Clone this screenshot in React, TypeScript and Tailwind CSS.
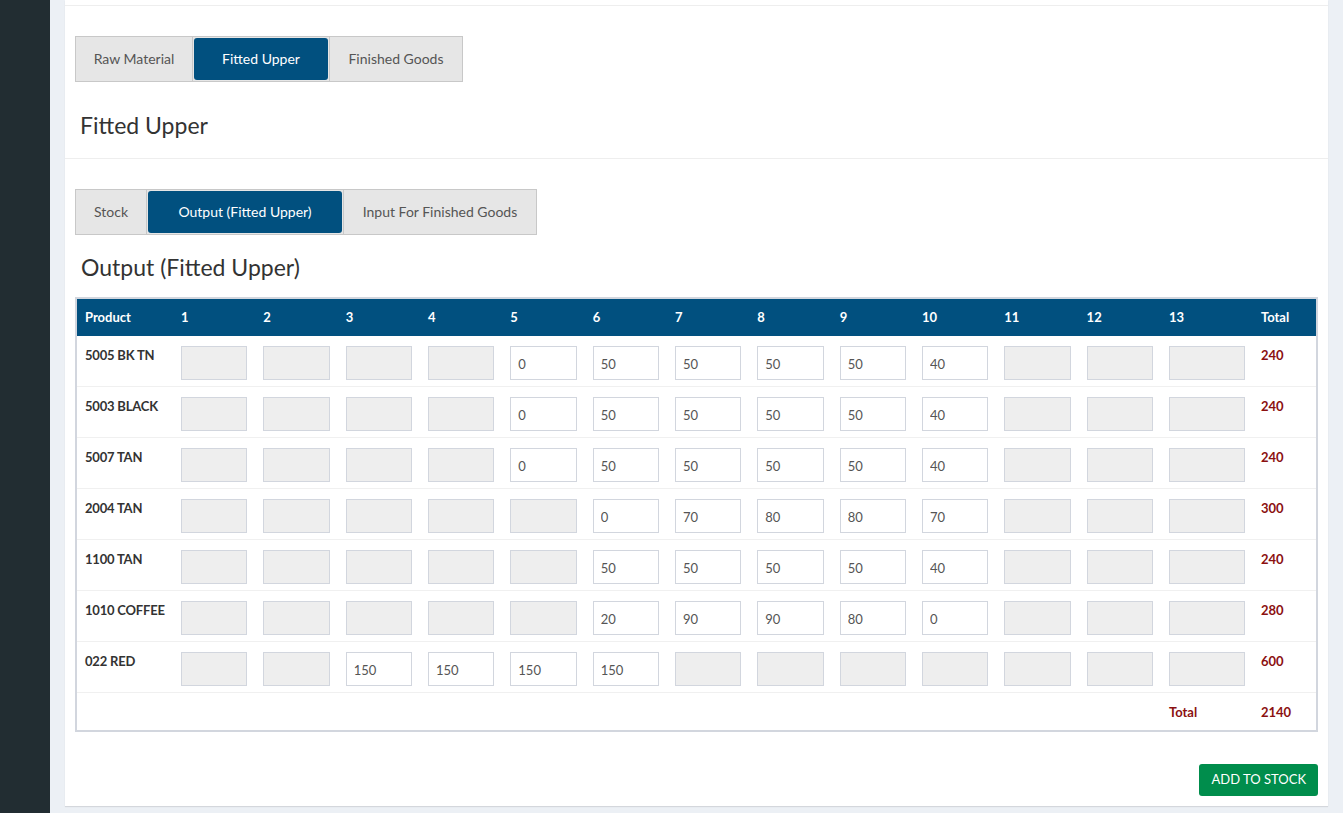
import React from 'react'

type Row = { name: string; values: (number | null)[]; total: number }

const ROWS: Row[] = [
  { name: '5005 BK TN', values: [null, null, null, null, 0, 50, 50, 50, 50, 40, null, null, null], total: 240 },
  { name: '5003 BLACK', values: [null, null, null, null, 0, 50, 50, 50, 50, 40, null, null, null], total: 240 },
  { name: '5007 TAN', values: [null, null, null, null, 0, 50, 50, 50, 50, 40, null, null, null], total: 240 },
  { name: '2004 TAN', values: [null, null, null, null, null, 0, 70, 80, 80, 70, null, null, null], total: 300 },
  { name: '1100 TAN', values: [null, null, null, null, null, 50, 50, 50, 50, 40, null, null, null], total: 240 },
  { name: '1010 COFFEE', values: [null, null, null, null, null, 20, 90, 90, 80, 0, null, null, null], total: 280 },
  { name: '022 RED', values: [null, null, 150, 150, 150, 150, null, null, null, null, null, null, null], total: 600 },
]

const SIZES = Array.from({ length: 13 }, (_, i) => i + 1)

function TabGroup({ tabs, active }: { tabs: { label: string; w: string }[]; active: number }) {
  return (
    <div className="flex">
      {tabs.map((t, i) => (
        <button
          key={t.label}
          className={`h-[46px] ${t.w} ${i > 0 ? '-ml-px' : ''} border border-[#c8c8c8] bg-[#e6e6e6] p-px text-[14px]`}
        >
          <span
            className={`flex h-full w-full items-center justify-center rounded-[3px] pb-[2px] ${
              i === active ? 'bg-[#01507f] text-white' : 'text-[#555]'
            }`}
          >
            {t.label}
          </span>
        </button>
      ))}
    </div>
  )
}

function Cell({ value }: { value: number | null }) {
  const disabled = value === null
  return (
    <input
      readOnly
      disabled={disabled}
      value={disabled ? '' : String(value)}
      className={`block h-[34px] w-full border border-[#d2d6de] px-[7px] pt-[1px] text-[13px] text-[#555] outline-none ${
        disabled ? 'bg-[#eeeeee]' : 'bg-white'
      }`}
    />
  )
}

export default function App() {
  const grand = ROWS.reduce((s, r) => s + r.total, 0)

  return (
    <div className="flex min-h-[813px] bg-[#ecf0f5] text-[#333]" style={{ fontFamily: 'Lato, "Open Sans", sans-serif' }}>
      <aside className="w-[50px] shrink-0 bg-[#222d32]" />
      <main className="flex-1 px-[15px] pb-[8px]">
        <div className="bg-white shadow-[0_1px_1px_rgba(0,0,0,0.1)]">
          <div className="h-[6px] border-b border-[#eeeeee]" />

          <div className="px-[10px] pt-[30px]">
            <TabGroup
              active={1}
              tabs={[
                { label: 'Raw Material', w: 'w-[118px]' },
                { label: 'Fitted Upper', w: 'w-[138px]' },
                { label: 'Finished Goods', w: 'w-[134px]' },
              ]}
            />
            <h3 className="mt-[28px] pl-[5px] text-[23px] leading-[30px]">Fitted Upper</h3>
          </div>
          <div className="mt-[18px] border-b border-[#eeeeee]" />

          <div className="px-[10px] pt-[30px] pb-[10px]">
            <TabGroup
              active={1}
              tabs={[
                { label: 'Stock', w: 'w-[72px]' },
                { label: 'Output (Fitted Upper)', w: 'w-[198px]' },
                { label: 'Input For Finished Goods', w: 'w-[194px]' },
              ]}
            />
            <h3 className="mt-[17px] pl-[6px] text-[23px] leading-[30px]">Output (Fitted Upper)</h3>

            <div className="mt-[15px] border-2 border-[#d2d6de]">
              <table className="w-full table-fixed border-collapse text-[13px]">
                <colgroup>
                  <col className="w-[96px]" />
                  {SIZES.slice(0, 12).map((s) => (
                    <col key={s} className="w-[82.33px]" />
                  ))}
                  <col className="w-[92px]" />
                  <col className="w-[63px]" />
                </colgroup>
                <thead>
                  <tr className="h-[37px] bg-[#01507f] text-left font-bold text-white">
                    <th className="px-[8px]">Product</th>
                    {SIZES.map((s) => (
                      <th key={s} className="px-[8px]">
                        {s}
                      </th>
                    ))}
                    <th className="px-[8px]">Total</th>
                  </tr>
                </thead>
                <tbody>
                  {ROWS.map((r) => (
                    <tr key={r.name} className="border-b border-[#f0f0f0] align-top">
                      <td className="whitespace-nowrap px-[8px] pt-[10px] font-bold leading-[18px] tracking-[-0.2px]">
                        {r.name}
                      </td>
                      {r.values.map((v, i) => (
                        <td key={i} className="px-[8px] pt-[10px] pb-[6px]">
                          <Cell value={v} />
                        </td>
                      ))}
                      <td className="px-[8px] pt-[10px] font-bold leading-[18px] text-[#8b1010]">{r.total}</td>
                    </tr>
                  ))}
                  <tr className="h-[37px] font-bold text-[#8b1010]">
                    <td colSpan={13} />
                    <td className="px-[8px] pt-[2px]">Total</td>
                    <td className="px-[8px] pt-[2px]">{grand}</td>
                  </tr>
                </tbody>
              </table>
            </div>

            <div className="mt-[32px] flex justify-end">
              <button className="h-[32px] rounded-[3px] bg-[#008d4c] px-[12px] text-[13px] text-white">
                ADD TO STOCK
              </button>
            </div>
          </div>
        </div>
      </main>
    </div>
  )
}
